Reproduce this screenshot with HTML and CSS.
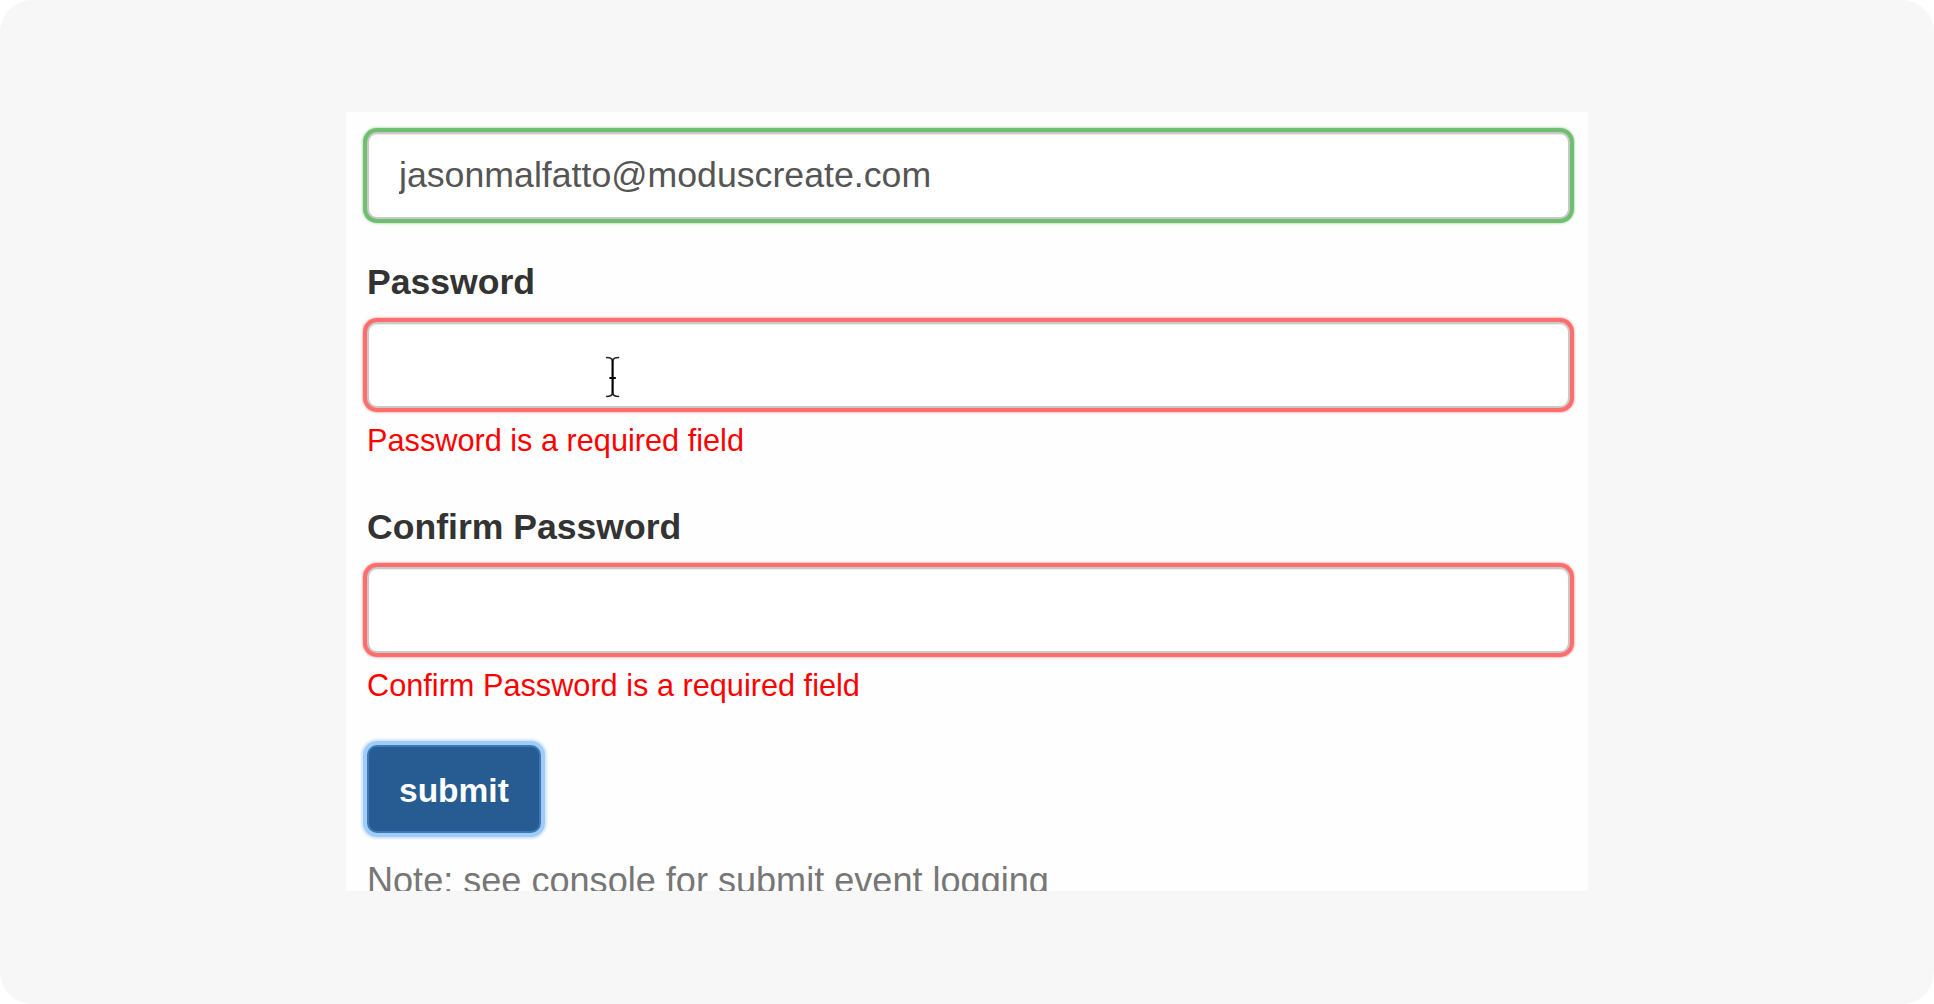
FILE: index.html
```html
<!DOCTYPE html>
<html lang="en">
<head>
<meta charset="utf-8">
<title>Form validation</title>
<link rel="stylesheet" href="styles.css">
</head>
<body>
<div class="screen">
  <form class="panel" novalidate>
    <div class="form-group">
      <input class="form-control is-valid" type="email" value="jasonmalfatto@moduscreate.com">
    </div>
    <div class="form-group has-error">
      <label class="control-label">Password</label>
      <div class="field">
        <input class="form-control is-invalid" type="password">
        <svg class="cursor" width="18" height="42" viewBox="0 0 18 42" aria-hidden="true">
          <path d="M2 1.6 C5 1.4 7.6 2.4 8.6 4.4 C9.6 2.4 12.2 1.4 15.2 1.6" fill="none" stroke="#222" stroke-width="1.4"/>
          <path d="M8.6 4 V38" stroke="#000" stroke-width="2.2"/>
          <path d="M5.4 22 H11.8" stroke="#000" stroke-width="2"/>
          <path d="M2 40.4 C5 40.6 7.6 39.6 8.6 37.6 C9.6 39.6 12.2 40.6 15.2 40.4" fill="none" stroke="#222" stroke-width="1.4"/>
        </svg>
      </div>
      <div class="help-block">Password is a required field</div>
    </div>
    <div class="form-group has-error last-group">
      <label class="control-label">Confirm Password</label>
      <div class="field">
        <input class="form-control is-invalid" type="password">
      </div>
      <div class="help-block">Confirm Password is a required field</div>
    </div>
    <button class="btn-submit" type="button">submit</button>
    <p class="note">Note: see console for submit event logging</p>
  </form>
</div>
</body>
</html>
```

FILE: styles.css
```css
html, body {
  margin: 0;
  padding: 0;
  background: #ffffff;
}

body {
  font-family: "Liberation Sans", Arial, Helvetica, sans-serif;
  color: #333333;
}

.screen {
  width: 1934px;
  height: 1004px;
  box-sizing: border-box;
  background: #f7f7f7;
  border-radius: 32px;
  padding: 112px 0 0 346px;
  overflow: hidden;
}

.panel {
  width: 1242px;
  height: 779px;
  box-sizing: border-box;
  background: #fefefe;
  padding: 20px 18px 0 21px;
  overflow: hidden;
  margin: 0;
}

.form-group {
  margin: 0 0 38px 0;
}

.form-group.last-group {
  margin-bottom: 35.5px;
}

.control-label {
  display: block;
  font-size: 35.6px;
  font-weight: bold;
  line-height: 51.4px;
  margin: 0 0 13.5px 0;
  color: #333333;
}

.field {
  position: relative;
}

.form-control {
  display: block;
  width: 100%;
  height: 87px;
  box-sizing: border-box;
  margin: 0;
  padding: 0 30px;
  border: 2px solid #c9c9c9;
  border-radius: 10px;
  background: #ffffff;
  font-family: "Liberation Sans", Arial, Helvetica, sans-serif;
  font-size: 35.7px;
  color: #555555;
  outline: none;
}

.form-control.is-valid {
  box-shadow: inset 0 1px 1px rgba(0, 0, 0, 0.08), 0 0 0 4px #70bf70, 0 0 2px 5px rgba(112, 191, 112, 0.4);
}

.form-control.is-invalid {
  height: 86px;
  box-shadow: inset 0 1px 1px rgba(0, 0, 0, 0.08), 0 0 0 4px #ff6d6d, 0 0 2px 5px rgba(255, 109, 109, 0.4);
}

.cursor {
  position: absolute;
  left: 237px;
  top: 34px;
}

.help-block {
  margin: 12.7px 0 0 0;
  padding-bottom: 3.7px;
  font-size: 30.7px;
  line-height: 40px;
  color: #ff0000;
}

.btn-submit {
  display: block;
  height: 88px;
  margin: 0;
  padding: 3px 30px 0 30px;
  box-sizing: border-box;
  border: 2px solid #3c78b6;
  border-radius: 10px;
  background: #265c91;
  color: #ffffff;
  font-family: "Liberation Sans", Arial, Helvetica, sans-serif;
  font-size: 33.5px;
  font-weight: bold;
  box-shadow: 0 0 0 4px #9fcdf7, 0 0 2px 6px rgba(159, 205, 247, 0.45);
  outline: none;
}

.note {
  margin: 22px 0 0 0;
  font-size: 36.1px;
  line-height: 51.4px;
  color: #777777;
}
```
